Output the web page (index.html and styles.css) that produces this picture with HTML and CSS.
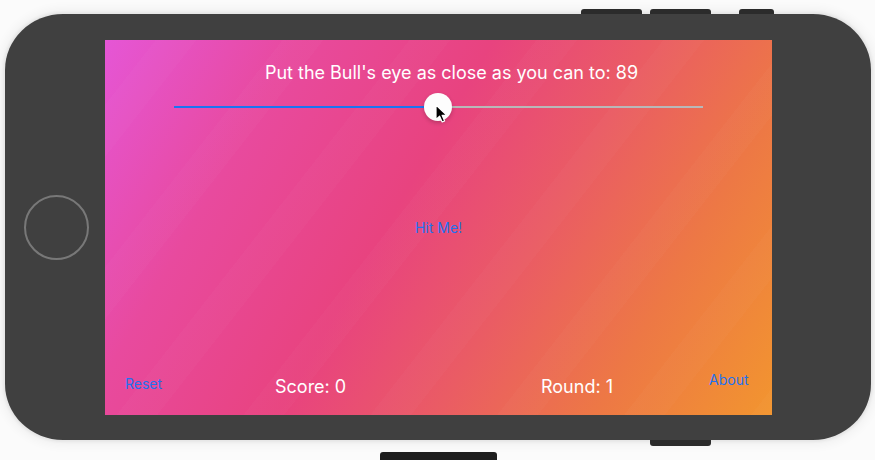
FILE: index.html
```html
<!DOCTYPE html>
<html>
<head>
<meta charset="utf-8">
<link rel="stylesheet" href="styles.css">
</head>
<body>
<div class="device">
  <div class="top-buttons">
    <span class="hw hw-a"></span>
    <span class="hw hw-b"></span>
    <span class="hw hw-c"></span>
  </div>
  <div class="phone">
    <div class="bezel-left"><span class="home"></span></div>
    <div class="screen">
      <div class="title">Put the Bull's eye as close as you can to: 89</div>
      <div class="slider">
        <div class="track-min"></div>
        <div class="thumb">
          <svg class="cursor" width="13" height="19" viewBox="0 0 13 19"><path d="M1 1 L1 15.5 L4.6 12.2 L7.2 18 L9.6 17 L7.1 11.3 L11.8 11.3 Z" fill="#000" stroke="#fff" stroke-width="1.2" stroke-linejoin="round"/></svg>
        </div>
        <div class="track-max"></div>
      </div>
      <div class="middle"><span class="link hit">Hit Me!</span></div>
      <div class="bottom">
        <span class="link reset">Reset</span>
        <span class="stat score">Score: 0</span>
        <span class="stat round">Round: 1</span>
        <span class="link about">About</span>
      </div>
    </div>
    <div class="bezel-right"></div>
  </div>
  <div class="bottom-buttons">
    <span class="hw hw-d"></span>
    <span class="hw hw-e"></span>
  </div>
</div>
</body>
</html>
```
FILE: styles.css
```css
html, body {
  margin: 0;
  padding: 0;
}
body {
  background: #fbfbfb;
  width: 875px;
  height: 460px;
  overflow: hidden;
  font-family: "Inter", "Liberation Sans", sans-serif;
}
.device {
  padding-top: 9px;
}
.top-buttons {
  display: flex;
  height: 5px;
  padding-left: 581px;
}
.hw {
  display: block;
  background: #2b2b2b;
}
.hw-a { width: 61px; border-radius: 3px 3px 0 0; }
.hw-b { width: 61px; margin-left: 8px; border-radius: 3px 3px 0 0; }
.hw-c { width: 35px; margin-left: 28px; border-radius: 3px 3px 0 0; }
.phone {
  margin-left: 5px;
  width: 866px;
  height: 426px;
  background: #404040;
  border-radius: 58px / 56px;
  display: flex;
  box-shadow: 0 0 3px 2px rgba(0,0,0,0.06), 0 0 10px 6px rgba(0,0,0,0.04);
}
.bezel-left {
  width: 100px;
  display: flex;
  align-items: center;
  justify-content: center;
}
.home {
  width: 61px;
  height: 61px;
  border: 2.5px solid #787878;
  border-radius: 50%;
  margin-left: 2px;
}
.bezel-right {
  width: 99px;
}
.screen {
  margin-top: 26px;
  width: 667px;
  height: 375px;
  position: relative;
  display: flex;
  flex-direction: column;
  background:
    repeating-linear-gradient(128deg, rgba(255,255,255,0) 0 40px, rgba(255,255,255,0.02) 40px 72px, rgba(255,255,255,0) 72px 100px),
    linear-gradient(120deg, #e556d6 0%, #e84a9e 22%, #e8437f 44%, #ea5c64 62%, #ed7845 80%, #f2952f 100%);
}
.title {
  margin-top: 22px;
  padding-left: 26px;
  text-align: center;
  color: #fff;
  font-size: 18px;
  line-height: 22px;
}
.slider {
  margin: 9px 69px 0;
  height: 28px;
  display: flex;
  align-items: center;
}
.track-min {
  width: 250px;
  height: 2px;
  background: #1a74f2;
}
.thumb {
  width: 28px;
  height: 28px;
  border-radius: 50%;
  background: #fdfdfd;
  box-shadow: 0 2px 4px rgba(0,0,0,0.2);
  position: relative;
  flex: none;
}
.cursor {
  position: absolute;
  left: 11px;
  top: 11px;
}
.track-max {
  flex: 1;
  height: 2px;
  background: #b8b8b8;
}
.link {
  color: #1f72f0;
  font-size: 14px;
}
.middle {
  flex: 1;
  display: flex;
  justify-content: center;
  align-items: center;
  padding-bottom: 38px;
}
.bottom {
  height: 44px;
  display: grid;
  grid-template-columns: 150px 266px 168px auto;
  padding-left: 20px;
  align-items: start;
}
.stat {
  color: #fff;
  font-size: 18px;
  line-height: 22px;
  margin-top: 5px;
}
.reset { margin-top: 4px; }
.about { margin-top: 0; }
.bottom-buttons {
  display: flex;
  align-items: flex-start;
  padding-left: 380px;
}
.hw-d {
  width: 117px;
  height: 8px;
  margin-top: 12px;
  border-radius: 3px 3px 0 0;
  background: #1e1e1e;
}
.hw-e {
  width: 61px;
  height: 6px;
  margin-left: 153px;
  border-radius: 0 0 3px 3px;
}
```
